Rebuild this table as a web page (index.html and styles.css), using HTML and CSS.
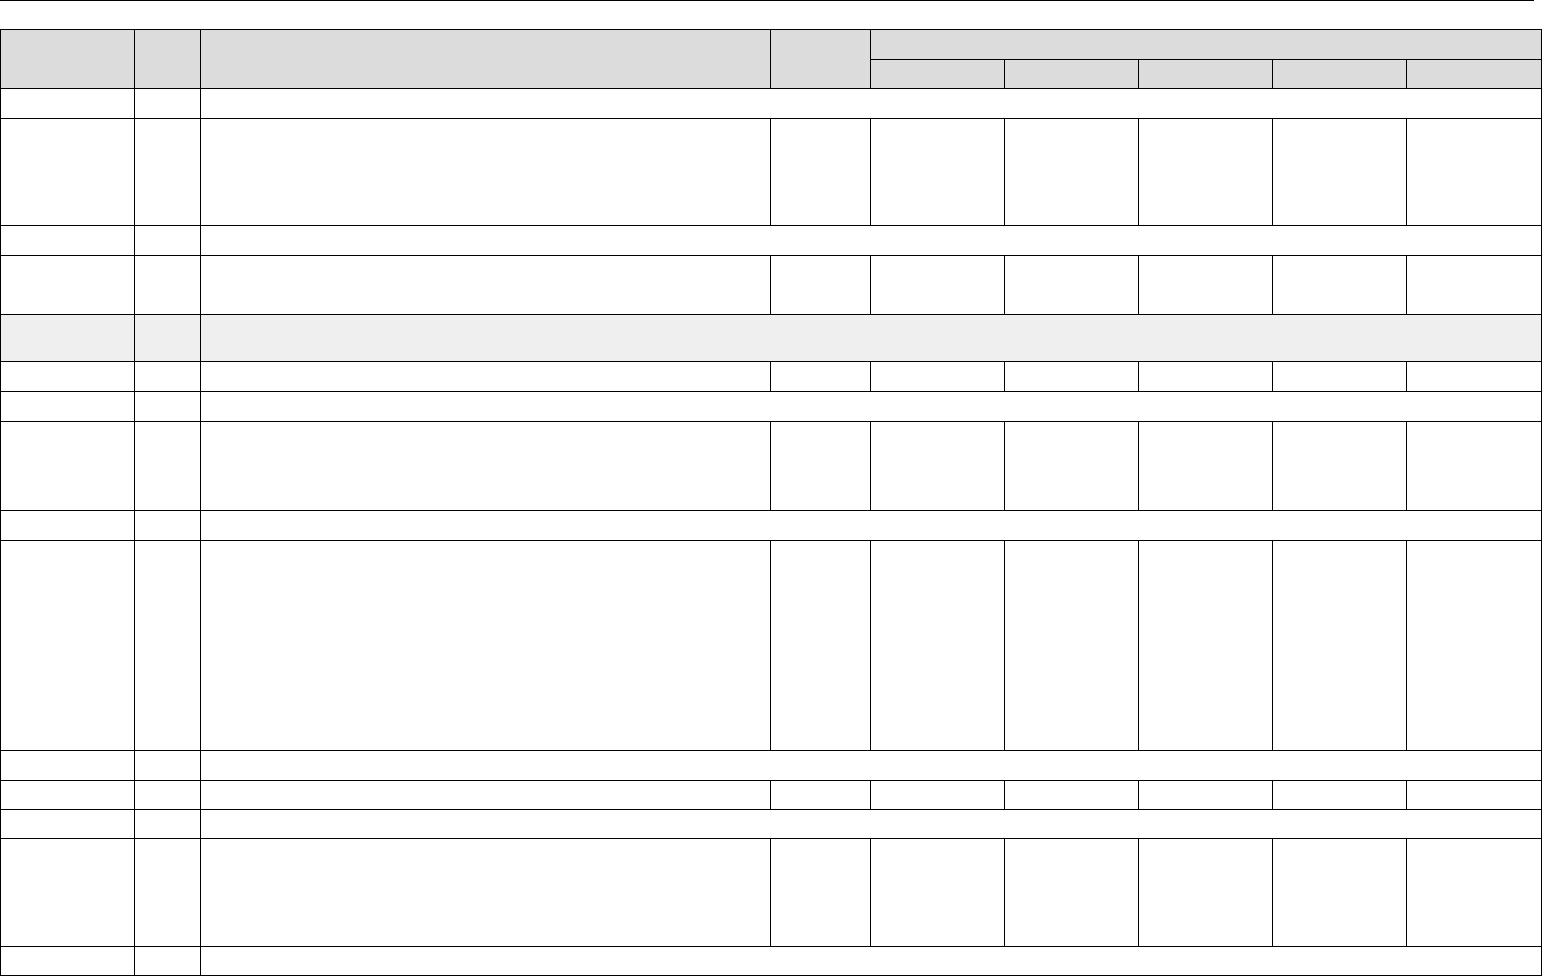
FILE: index.html
```html
<!DOCTYPE html>
<html lang="en">
<head>
<meta charset="utf-8">
<title>Table</title>
<link rel="stylesheet" href="styles.css">
</head>
<body>
<div class="rule"></div>
<table class="grid">
  <colgroup>
    <col class="c1"><col class="c2"><col class="c3"><col class="c4">
    <col class="c5"><col class="c5"><col class="c5"><col class="c5"><col class="c9">
  </colgroup>
  <thead>
    <tr class="h30"><th rowspan="2"></th><th rowspan="2"></th><th rowspan="2"></th><th rowspan="2"></th><th colspan="5"></th></tr>
    <tr class="h29"><th></th><th></th><th></th><th></th><th></th></tr>
  </thead>
  <tbody>
    <tr class="h30"><td></td><td></td><td colspan="7"></td></tr>
    <tr class="h107"><td></td><td></td><td></td><td></td><td></td><td></td><td></td><td></td><td></td></tr>
    <tr class="h30"><td></td><td></td><td colspan="7"></td></tr>
    <tr class="h59"><td></td><td></td><td></td><td></td><td></td><td></td><td></td><td></td><td></td></tr>
    <tr class="h47 shade"><td></td><td></td><td colspan="7"></td></tr>
    <tr class="h30"><td></td><td></td><td></td><td></td><td></td><td></td><td></td><td></td><td></td></tr>
    <tr class="h30"><td></td><td></td><td colspan="7"></td></tr>
    <tr class="h89"><td></td><td></td><td></td><td></td><td></td><td></td><td></td><td></td><td></td></tr>
    <tr class="h30"><td></td><td></td><td colspan="7"></td></tr>
    <tr class="h210"><td></td><td></td><td></td><td></td><td></td><td></td><td></td><td></td><td></td></tr>
    <tr class="h30"><td></td><td></td><td colspan="7"></td></tr>
    <tr class="h29"><td></td><td></td><td></td><td></td><td></td><td></td><td></td><td></td><td></td></tr>
    <tr class="h29"><td></td><td></td><td colspan="7"></td></tr>
    <tr class="h108"><td></td><td></td><td></td><td></td><td></td><td></td><td></td><td></td><td></td></tr>
    <tr class="h29"><td></td><td></td><td colspan="7"></td></tr>
  </tbody>
</table>
</body>
</html>
```
FILE: styles.css
```css
html, body {
  margin: 0;
  padding: 0;
  background: #ffffff;
  font-family: "Liberation Sans", Arial, sans-serif;
}

.rule {
  width: 1534px;
  height: 1px;
  background: #000000;
  margin-bottom: 28px;
}

.grid {
  border-collapse: collapse;
  table-layout: fixed;
  width: 1541px;
}

.grid th,
.grid td {
  border: 1px solid #000000;
  padding: 0;
}

.grid thead th {
  background: #dcdcdc;
}

.grid .shade td {
  background: #efefef;
}

.c1 { width: 134px; }
.c2 { width: 66px; }
.c3 { width: 570px; }
.c4 { width: 100px; }
.c5 { width: 134px; }
.c9 { width: 135px; }

.h29 { height: 29px; }
.h30 { height: 30px; }
.h47 { height: 47px; }
.h59 { height: 59px; }
.h89 { height: 89px; }
.h107 { height: 107px; }
.h108 { height: 108px; }
.h210 { height: 210px; }
```
